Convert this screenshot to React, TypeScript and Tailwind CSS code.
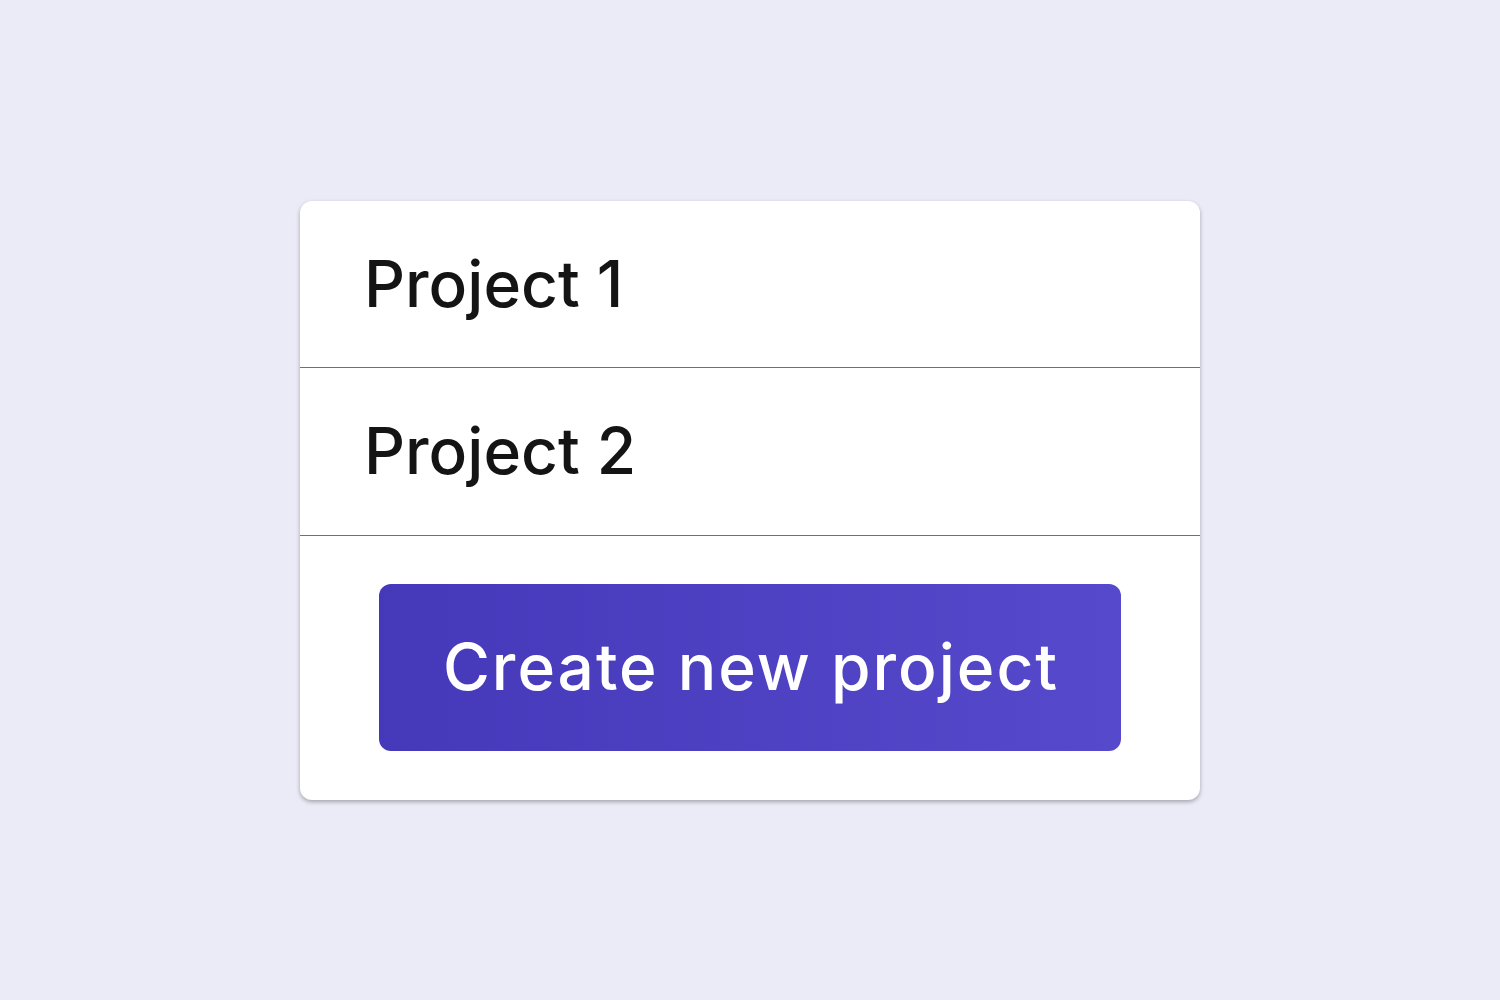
export default function App() {
  return (
    <div className="min-h-screen w-full bg-[#ebebf7] flex items-center justify-center" style={{ fontFamily: 'Inter, "Noto Sans", sans-serif' }}>
      <div className="w-[900px] bg-white rounded-[12px] shadow-[0_2px_4px_rgba(0,0,0,0.3)] flex flex-col overflow-hidden">
        <div className="h-[167px] flex items-center pl-[64px] border-b border-[#707070]">
          <span className="text-[64px] leading-none text-[#141414] font-medium">Project 1</span>
        </div>
        <div className="h-[168px] flex items-center pl-[64px] border-b border-[#707070]">
          <span className="text-[64px] leading-none text-[#141414] font-medium">Project 2</span>
        </div>
        <div className="px-[79px] pt-[48px] pb-[49px]">
          <div className="h-[167px] rounded-[12px] bg-gradient-to-r from-[#4538b9] to-[#5649cb] flex items-center justify-center">
            <span className="text-[64px] leading-none text-white font-medium tracking-[2px] pl-[2px]">Create new project</span>
          </div>
        </div>
      </div>
    </div>
  );
}
